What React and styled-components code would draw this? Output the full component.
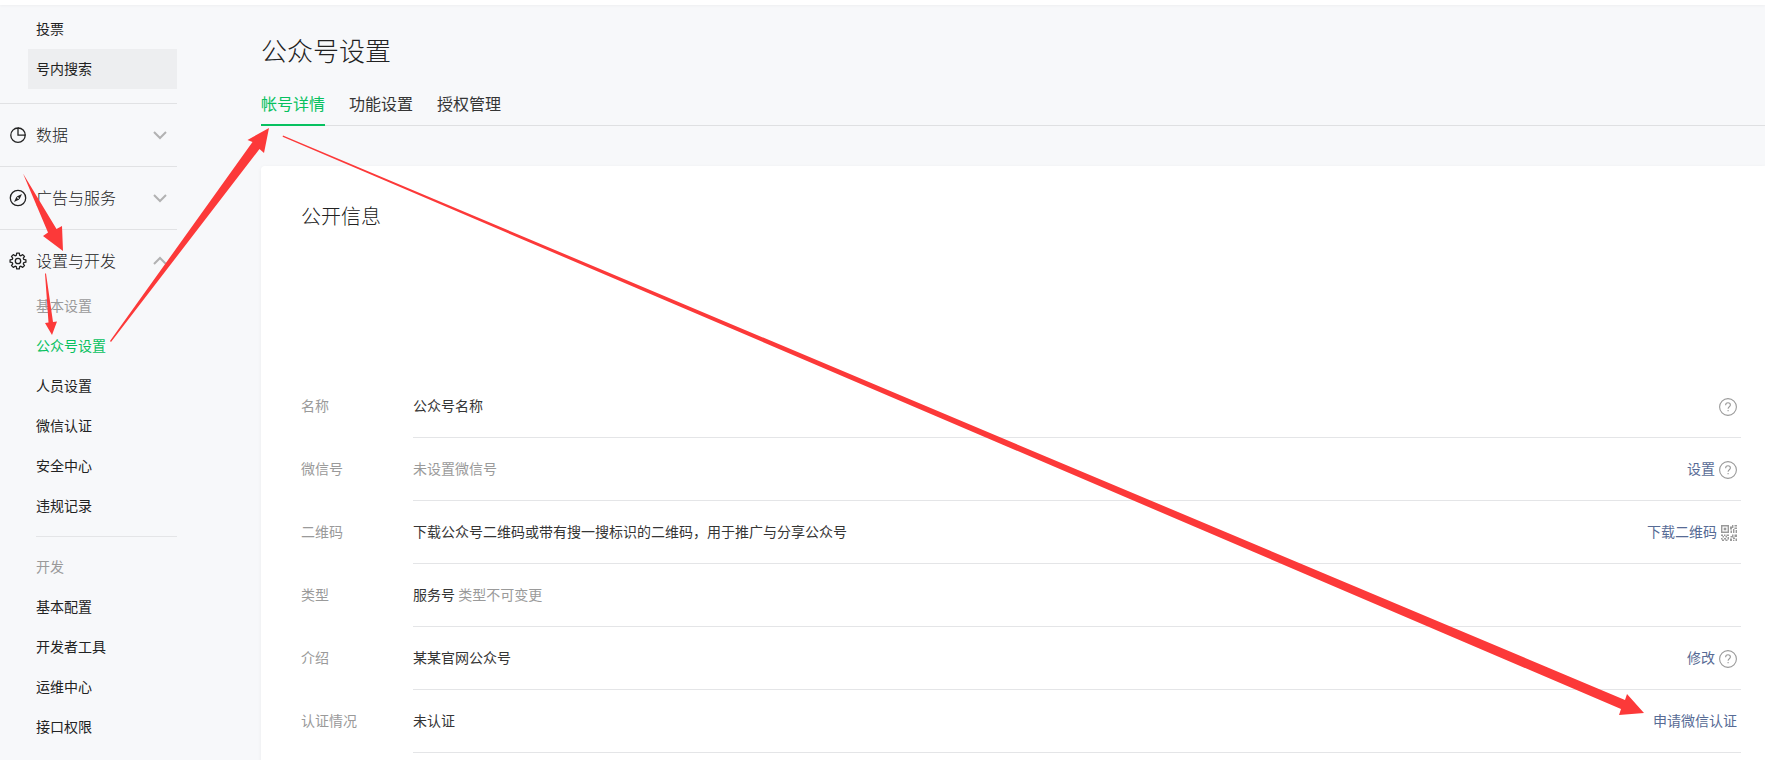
import React, { useState } from "react";
import styled, { createGlobalStyle } from "styled-components";

const GlobalStyle = createGlobalStyle`
  * { box-sizing: border-box; }
  body {
    margin: 0;
    background: #f7f8fa;
    color: #353535;
    font-family: "Noto Sans CJK SC", sans-serif;
    font-size: 14px;
    font-weight: 400;
  }
  a { text-decoration: none; color: inherit; }
  ul, dl, dd, h1, h2 { margin: 0; padding: 0; list-style: none; font-weight: inherit; }
  button { border: 0; padding: 0; background: none; font: inherit; color: inherit; cursor: pointer; }
  svg { display: block; }
`;

const Page = styled.div`
  position: relative;
  display: flex;
  flex-direction: column;
  min-height: 100vh;
  overflow: hidden;
`;

const TopBar = styled.header`
  height: 5px;
  background: #fff;
  box-shadow: 0 1px 3px rgba(0, 0, 0, 0.04);
`;

const Body = styled.div`
  flex: 1;
  display: flex;
`;

const Sidebar = styled.nav`
  width: 177px;
  flex-shrink: 0;
  padding-top: 4px;
  color: #222;
`;

const SubList = styled.ul`
  padding-left: 28px;
`;

const SubItem = styled.a`
  display: block;
  padding: 0 0 2px 8px;
  line-height: 38px;
  color: ${(p) => (p.$active ? "#07c160" : "#222")};
  background: ${(p) => (p.$hover ? "#edeef0" : "transparent")};
`;

const SubTitle = styled.li`
  padding: 0 0 2px 8px;
  line-height: 38px;
  color: #9a9a9a;
`;

const SubDivider = styled.li`
  height: 1px;
  margin: 10px 0 10px 8px;
  background: #e4e5e7;
`;

const FirstGroup = styled.div`
  padding-bottom: 14px;
`;

const Section = styled.div`
  border-top: 1px solid #e1e2e4;
  padding: 15px 0;

  ${SubList} {
    margin-top: 9px;
  }
`;

const SectionButton = styled.button`
  display: flex;
  align-items: center;
  gap: 9px;
  width: 100%;
  height: 32px;
  padding: 0 9px;
  font-size: 16px;
  font-weight: 300;
  text-align: left;

  span {
    flex: 1;
    padding-bottom: 2px;
  }
`;

const Main = styled.main`
  flex: 1;
  display: flex;
  flex-direction: column;
  margin-left: 84px;
  padding-top: 27px;
`;

const PageTitle = styled.h1`
  font-size: 26px;
  font-weight: 300;
  line-height: 36px;
  color: #222;
`;

const Tabs = styled.nav`
  display: flex;
  gap: 24px;
  margin: 23px 0 40px;
  border-bottom: 1px solid #dfe0e2;
`;

const Tab = styled.a`
  margin-bottom: -1px;
  padding-bottom: 9px;
  font-size: 16px;
  line-height: 24px;
  color: ${(p) => (p.$active ? "#07c160" : "#353535")};
  border-bottom: 2px solid ${(p) => (p.$active ? "#07c160" : "transparent")};
`;

const Card = styled.section`
  flex: 1;
  padding: 34px 24px 0 40px;
  background: #fff;
  border-radius: 4px 0 0 0;
  box-shadow: 0 1px 4px rgba(0, 0, 0, 0.05);
`;

const CardTitle = styled.h2`
  margin-bottom: 143px;
  font-size: 20px;
  font-weight: 300;
  line-height: 32px;
  color: #222;
`;

const Row = styled.div`
  display: flex;
  min-height: 63px;
  line-height: 60px;
`;

const Label = styled.dt`
  width: 112px;
  color: #9a9a9a;
`;

const Value = styled.dd`
  flex: 1;
  display: flex;
  justify-content: space-between;
  padding-right: 4px;
  border-bottom: 1px solid #e4e5e7;
`;

const Muted = styled.span`
  color: #9a9a9a;
`;

const Actions = styled.div`
  display: flex;
  align-items: flex-start;
  gap: 4px;
  color: #576b95;

  button {
    margin-top: 23px;
  }

  > svg {
    margin-top: 24px;
  }
`;

const Arrows = styled.svg`
  position: absolute;
  top: 0;
  left: 0;
  width: 100%;
  height: 100%;
  pointer-events: none;
  fill: #fc3939;
`;

function PieIcon() {
  return (
    <svg width="18" height="18" fill="none" stroke="#222" strokeWidth="1.3">
      <path d="M9 2a7.2 7.2 0 1 0 7.2 7.2H9z" />
      <path d="M9 2c4.2 0 7.2 3 7.2 7.2" />
    </svg>
  );
}

function CompassIcon() {
  return (
    <svg width="18" height="18" fill="none" stroke="#222" strokeWidth="1.3">
      <circle cx="9" cy="9" r="7.7" />
      <path d="M13 5 10.5 10.3 7.7 7.5z" fill="#222" stroke="none" />
      <path d="M5 13 7.5 7.7 10.3 10.5z" fill="#222" stroke="none" />
      <circle cx="9" cy="9" r=".8" fill="#f7f8fa" stroke="none" />
    </svg>
  );
}

function GearIcon() {
  return (
    <svg width="18" height="18" fill="none" stroke="#222" strokeWidth="1.3" strokeLinejoin="round">
      <path d="M7.7 1.2h2.6l.4 2.1 1.2.5 1.8-1.2 1.8 1.8-1.2 1.8.5 1.2 2.1.4v2.4l-2.1.4-.5 1.2 1.2 1.8-1.8 1.8-1.8-1.2-1.2.5-.4 2.1H7.7l-.4-2.1-1.2-.5-1.8 1.2-1.8-1.8 1.2-1.8-.5-1.2-2.1-.4V7.8l2.1-.4.5-1.2-1.2-1.8 1.8-1.8 1.8 1.2 1.2-.5z" />
      <circle cx="9" cy="9" r="2.7" />
    </svg>
  );
}

function Chevron({ open }) {
  return (
    <svg width="16" height="10" fill="none" stroke="#b2b2b2" strokeWidth="2">
      <path d={open ? "M2 8 8 2 14 8" : "M2 2 8 8 14 2"} />
    </svg>
  );
}

function HelpIcon() {
  return (
    <svg width="18" height="18" fill="none" stroke="#9a9a9a" strokeWidth="1.1">
      <circle cx="9" cy="9" r="8.4" />
      <path d="M6.6 7.2c0-1.5 1-2.4 2.4-2.4s2.4.9 2.4 2.2c0 1.7-2.3 1.8-2.3 3.7" />
      <path d="M9.1 12v1.3" />
    </svg>
  );
}

function QrIcon() {
  return (
    <svg width="16" height="16" fill="#9a9a9a">
      <path d="M0 0h8v8H0zM1.4 1.4v5.2h5.2V1.4z" fillRule="evenodd" />
      <path d="M2.7 2.7h2.6v2.6H2.7z" />
      <path d="M9 1.5h2V0h1.4v3H11v1.5H9zM13.5 0H16v1.4h-2.5zM9.5 5.5H11V8H9.5zM12 4h1.4v4H12zM13.4 2.5H16V4h-2.6zM14.6 5H16v3h-1.4z" />
      <path d="M0 9.5h2V11H0zM3 9.5h1.5V11H3zM5.5 9.5H8V11H5.5zM1.5 11H3v1.5H1.5zM4.5 11H6v1.5H4.5zM6.5 12H8v2.5H6.5zM0 13h1.5v1.5H0zM3 13h2v1.5H3zM1 14.5h2V16H1zM4.5 14.5h2V16h-2z" />
      <path d="M11 9.5h1.5V11H11zM13.5 9.5H16V12h-2.5zM9.5 11h3v1.5h-3zM12 12.5h2V14h-2zM9 13.5h2V16H9zM12 14.8h1.4V16H12zM14.5 13.5H16V16h-1.5z" />
    </svg>
  );
}

function HelpButton() {
  return (
    <button type="button" aria-label="帮助">
      <HelpIcon />
    </button>
  );
}

function MenuSection({ icon, title, defaultOpen, children }) {
  const [open, setOpen] = useState(!!defaultOpen);

  return (
    <Section>
      <SectionButton type="button" aria-expanded={open} onClick={() => setOpen(!open)}>
        {icon}
        <span>{title}</span>
        <Chevron open={open} />
      </SectionButton>
      {open && children}
    </Section>
  );
}

const settings = ["公众号设置", "人员设置", "微信认证", "安全中心", "违规记录"];
const develop = ["基本配置", "开发者工具", "运维中心", "接口权限"];

const rows = [
  { label: "名称", value: "公众号名称", help: true },
  { label: "微信号", value: <Muted>未设置微信号</Muted>, action: "设置", help: true },
  {
    label: "二维码",
    value: "下载公众号二维码或带有搜一搜标识的二维码，用于推广与分享公众号",
    action: "下载二维码",
    qr: true,
  },
  { label: "类型", value: <>服务号 <Muted>类型不可变更</Muted></> },
  { label: "介绍", value: "某某官网公众号", action: "修改", help: true },
  { label: "认证情况", value: "未认证", action: "申请微信认证" },
];

function App() {
  return (
    <Page>
      <GlobalStyle />
      <TopBar />
      <Body>
        <Sidebar>
          <FirstGroup>
            <SubList>
              <li><SubItem href="#vote">投票</SubItem></li>
              <li><SubItem href="#search" $hover>号内搜索</SubItem></li>
            </SubList>
          </FirstGroup>
          <MenuSection icon={<PieIcon />} title="数据" />
          <MenuSection icon={<CompassIcon />} title="广告与服务" />
          <MenuSection icon={<GearIcon />} title="设置与开发" defaultOpen>
            <SubList>
              <SubTitle>基本设置</SubTitle>
              {settings.map((name, i) => (
                <li key={name}>
                  <SubItem href="#settings" $active={i === 0}>{name}</SubItem>
                </li>
              ))}
              <SubDivider />
              <SubTitle>开发</SubTitle>
              {develop.map((name) => (
                <li key={name}>
                  <SubItem href="#develop">{name}</SubItem>
                </li>
              ))}
            </SubList>
          </MenuSection>
        </Sidebar>

        <Main>
          <PageTitle>公众号设置</PageTitle>
          <Tabs>
            <Tab href="#detail" $active>帐号详情</Tab>
            <Tab href="#function">功能设置</Tab>
            <Tab href="#auth">授权管理</Tab>
          </Tabs>
          <Card>
            <CardTitle>公开信息</CardTitle>
            <dl>
              {rows.map((row) => (
                <Row key={row.label}>
                  <Label>{row.label}</Label>
                  <Value>
                    <div>{row.value}</div>
                    <Actions>
                      {row.action && <a href="#edit">{row.action}</a>}
                      {row.help && <HelpButton />}
                      {row.qr && <QrIcon />}
                    </Actions>
                  </Value>
                </Row>
              ))}
            </dl>
          </Card>
        </Main>
      </Body>

      {/* step by step arrows over the page */}
      <Arrows aria-hidden="true">
        <path d="M23 173.5 56.5 229 62 226 63 251 43 236 48 232.5z" />
        <path d="M45 273.5 46 273.5 53 322 57 321.5 52 335 45 323 48.5 322.5z" />
        <path d="M110 341 252.5 142 247.5 140 269 128 264 153 259.5 149 111 342z" />
        <path d="M283 135.6 1625 700 1627 694 1644 713 1619 715 1621 709 282.6 136.8z" />
      </Arrows>
    </Page>
  );
}

export default App;
